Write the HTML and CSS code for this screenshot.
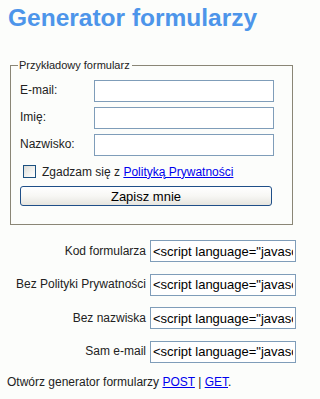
FILE: index.html
```html
<!DOCTYPE html>
<html lang="pl">
<head>
<meta charset="utf-8">
<title>Generator formularzy</title>
<link rel="stylesheet" href="styles.css">
</head>
<body>
<h1 class="title">Generator formularzy</h1>
<fieldset class="demo">
  <legend class="demo-legend">Przykładowy formularz</legend>
  <div class="fields">
    <label class="field-label" for="email">E-mail:</label>
    <input class="field-input" id="email" type="text">
    <label class="field-label" for="imie">Imię:</label>
    <input class="field-input" id="imie" type="text">
    <label class="field-label" for="nazwisko">Nazwisko:</label>
    <input class="field-input" id="nazwisko" type="text">
  </div>
  <div class="agree">
    <input class="check" type="checkbox" id="zgoda">
    <label class="agree-text" for="zgoda">Zgadzam się z <a href="#" class="link">Polityką Prywatności</a></label>
  </div>
  <button class="submit" type="button">Zapisz mnie</button>
</fieldset>
<div class="codes">
  <label class="code-label">Kod formularza</label>
  <input class="code-input" type="text" value='&lt;script language="javascript"'>
  <label class="code-label">Bez Polityki Prywatności</label>
  <input class="code-input" type="text" value='&lt;script language="javascript"'>
  <label class="code-label">Bez nazwiska</label>
  <input class="code-input" type="text" value='&lt;script language="javascript"'>
  <label class="code-label">Sam e-mail</label>
  <input class="code-input" type="text" value='&lt;script language="javascript"'>
</div>
<p class="footer">Otwórz generator formularzy <a href="#" class="link">POST</a> | <a href="#" class="link">GET</a>.</p>
</body>
</html>
```
FILE: styles.css
```css
html, body {
  margin: 0;
  padding: 0;
  background: #fcfdfb;
}
body {
  font-family: "Liberation Sans", Arial, sans-serif;
  font-size: 12px;
  color: #222;
  width: 300px;
}
.title {
  margin: 4px 0 0 8px;
  font-size: 24.5px;
  line-height: 28px;
  font-weight: bold;
  color: #4d95ea;
}
.demo {
  margin: 27px 0 0 10px;
  width: 283px;
  box-sizing: border-box;
  border: 1px solid #8a8676;
  padding: 8px 9px 18px 9px;
}
.demo-legend {
  font-size: 11px;
  line-height: 13px;
  padding: 0 2px 0 1px;
  margin-left: -2px;
  color: #222;
}
.fields {
  display: grid;
  grid-template-columns: 74px 180px;
  row-gap: 5px;
  align-items: center;
}
.field-label {
  font-size: 12px;
  padding-bottom: 3px;
}
.field-input {
  box-sizing: border-box;
  width: 180px;
  height: 22px;
  margin: 0;
  border: 1px solid #7f9db9;
  background: #fff;
  padding: 1px 3px;
  font-family: "Liberation Sans", Arial, sans-serif;
  font-size: 13px;
}
.agree {
  display: flex;
  align-items: center;
  margin-top: 9px;
  padding-left: 3px;
  height: 13px;
}
.check {
  appearance: none;
  -webkit-appearance: none;
  box-sizing: border-box;
  width: 13px;
  height: 13px;
  margin: 0 6px 0 0;
  border: 1px solid #1c5180;
  background: linear-gradient(135deg, #dcdcd7 0%, #f4f4f1 60%, #fff 100%);
}
.agree-text {
  font-size: 12px;
  line-height: 13px;
  padding-top: 1px;
}
.link {
  color: #0000ee;
  text-decoration: underline;
}
.submit {
  display: block;
  box-sizing: border-box;
  width: 252px;
  height: 20px;
  margin: 8px 0 0 0;
  border: 1px solid #1f4f88;
  border-radius: 3px;
  background: linear-gradient(to bottom, #ffffff 0%, #f7f7f4 50%, #e6e5df 100%);
  font-family: "Liberation Sans", Arial, sans-serif;
  font-size: 13px;
  color: #000;
  padding: 0;
}
.codes {
  display: grid;
  grid-template-columns: 146px 146px;
  column-gap: 4px;
  row-gap: 11.67px;
  margin: 15px 0 0 0;
  align-items: center;
}
.code-label {
  text-align: right;
  font-size: 12px;
  padding-bottom: 1px;
}
.code-input {
  box-sizing: border-box;
  width: 146px;
  height: 22px;
  margin: 0;
  border: 1px solid #7f9db9;
  background: #fff;
  padding: 1px 2px;
  font-family: "Liberation Sans", Arial, sans-serif;
  font-size: 13px;
  color: #000;
}
.footer {
  margin: 12px 0 0 7px;
  font-size: 12px;
}
```
